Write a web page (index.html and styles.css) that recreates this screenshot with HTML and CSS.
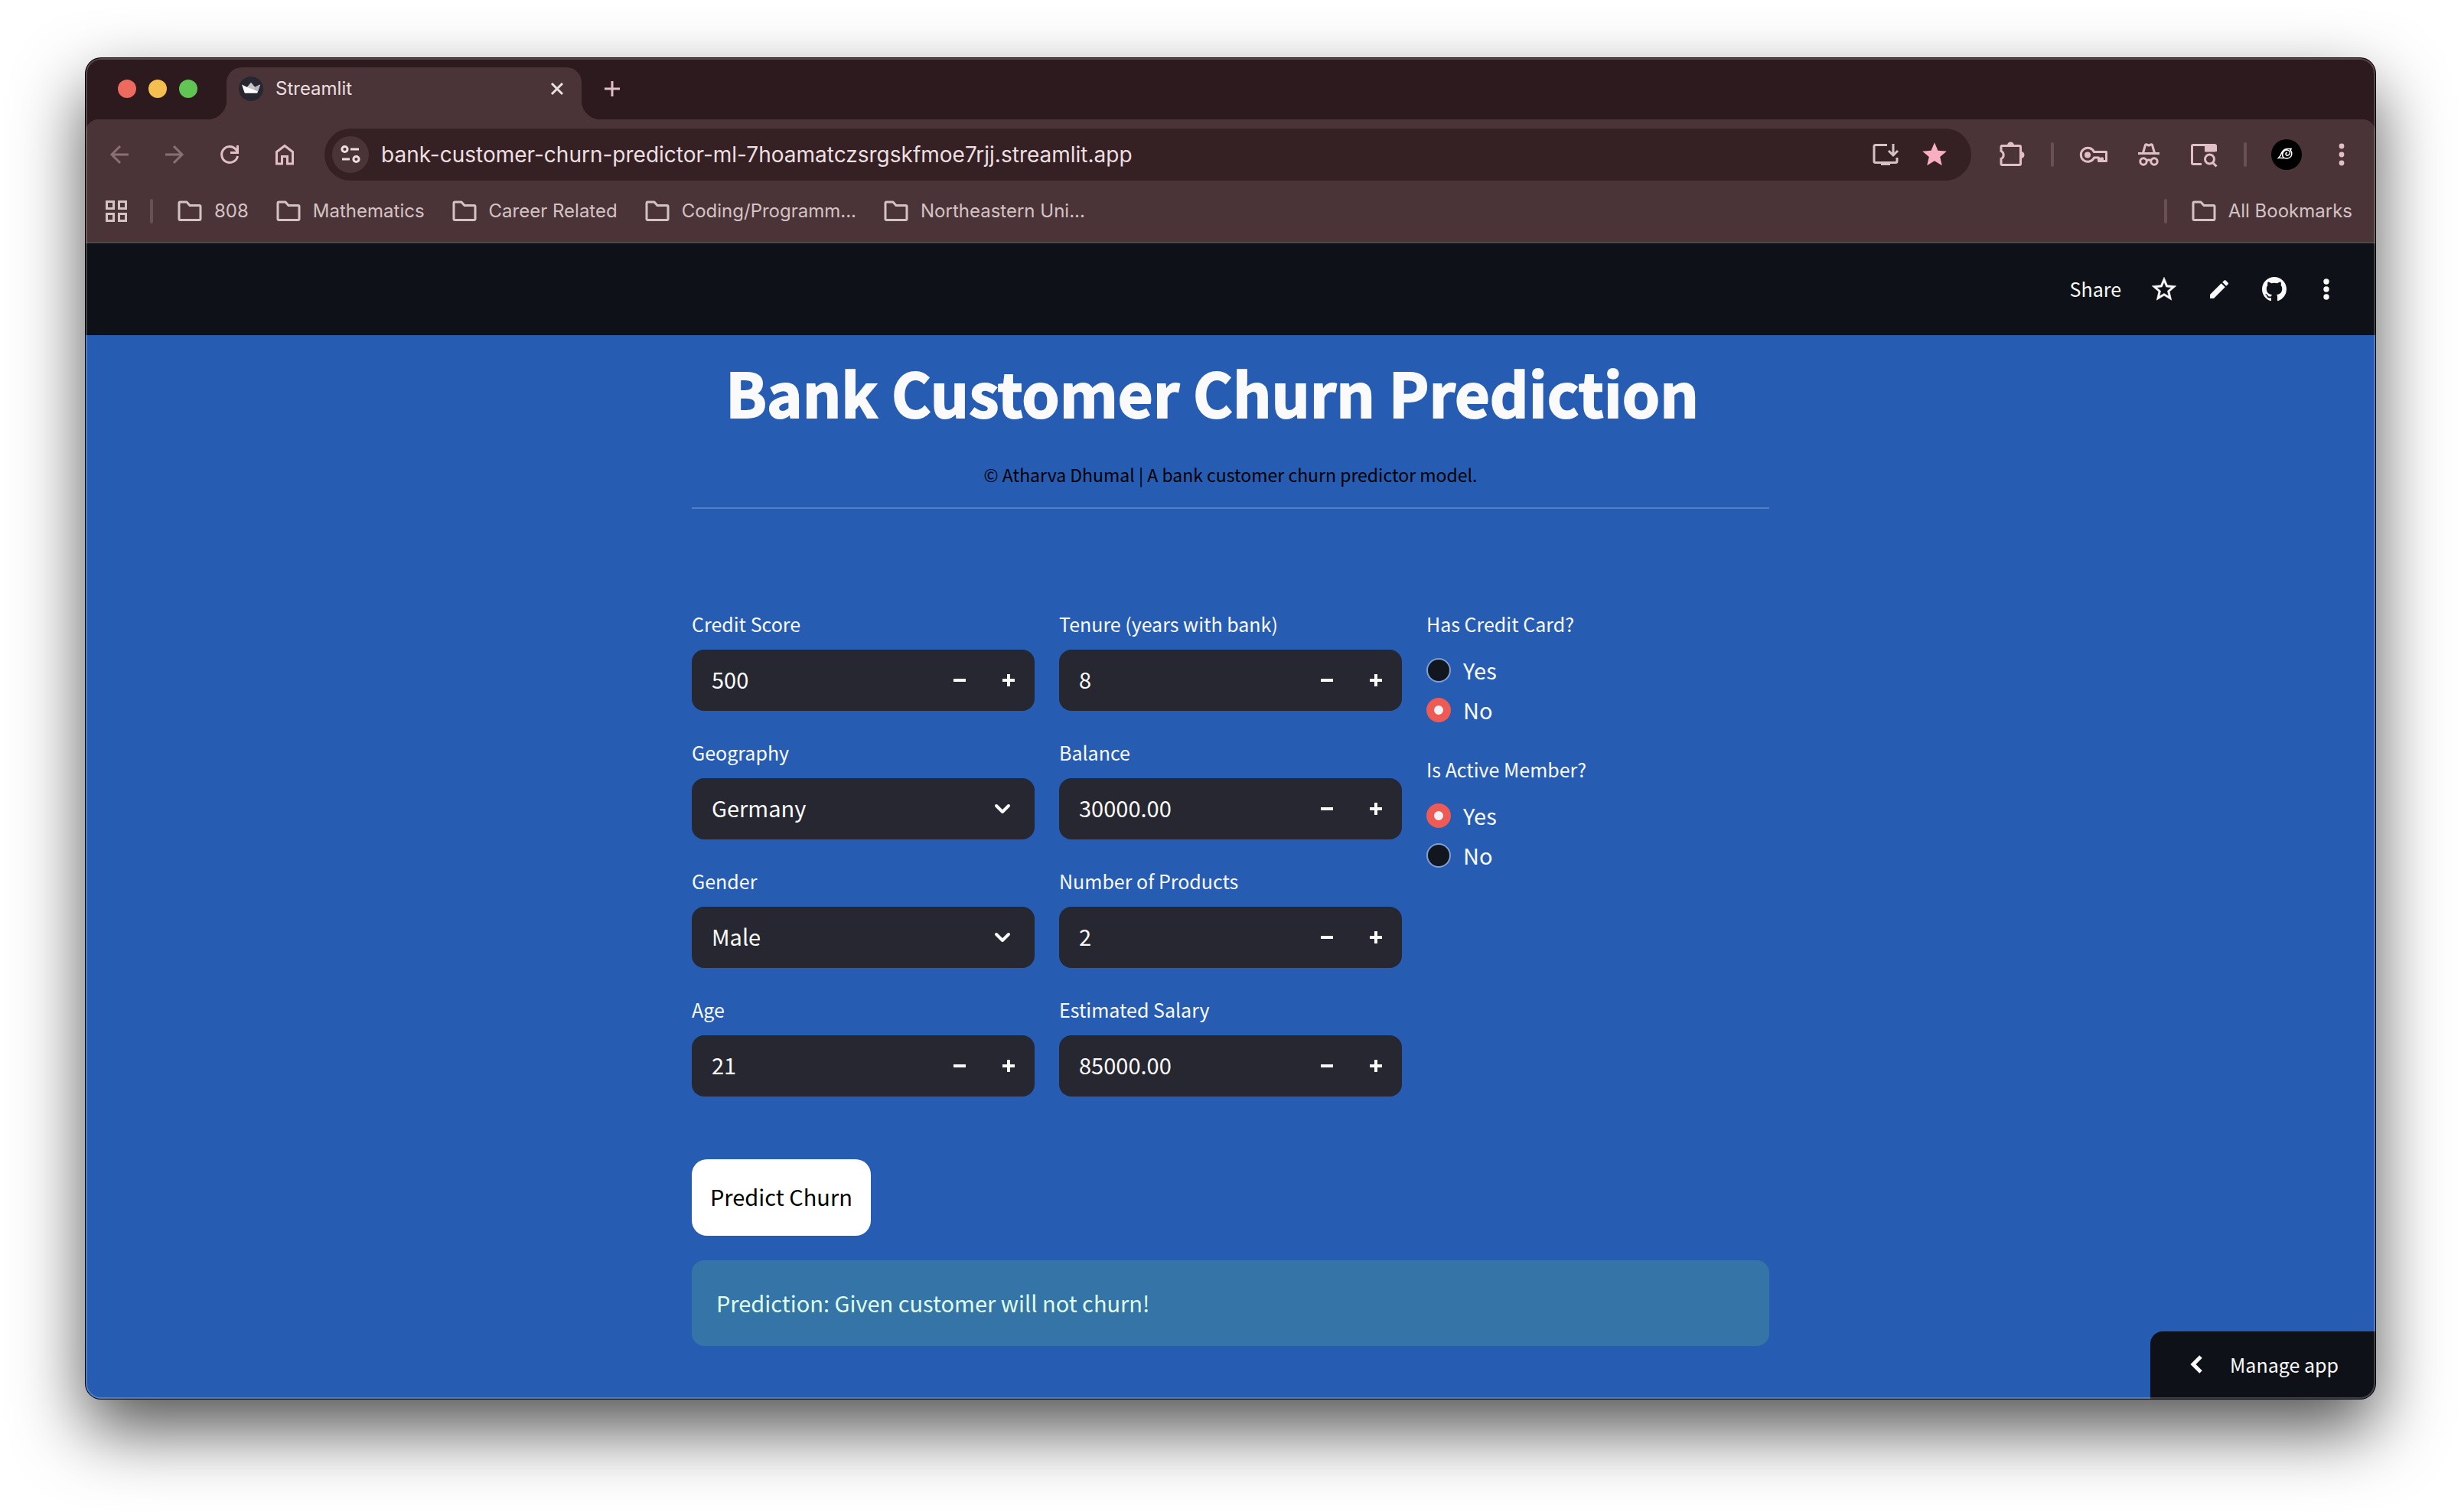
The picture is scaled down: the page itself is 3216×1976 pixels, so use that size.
FILE: index.html
```html
<!DOCTYPE html>
<html lang="en">
<head>
<meta charset="utf-8">
<title>Streamlit</title>
<link rel="stylesheet" href="styles.css">
</head>
<body>
<svg class="sprite" aria-hidden="true">
  <symbol id="folder" viewBox="0 0 32 32"><path d="M2 5.500a1.500 1.500 0 0 1 1.500-1.500h8.500l4 4.500h12.500a1.500 1.500 0 0 1 1.500 1.500v16a1.500 1.500 0 0 1-1.500 1.500H3.500A1.500 1.500 0 0 1 2 26z" fill="none" stroke="currentColor" stroke-width="3" stroke-linejoin="round"/></symbol>
  <symbol id="chevron" viewBox="0 0 24 24"><path d="M4 8l8 8 8-8" fill="none" stroke="currentColor" stroke-width="4" stroke-linecap="round" stroke-linejoin="round"/></symbol>
  <symbol id="minus" viewBox="0 0 16 16"><path d="M0 8h16" stroke="currentColor" stroke-width="4"/></symbol>
  <symbol id="plus" viewBox="0 0 16 16"><path d="M0 8h16M8 0v16" stroke="currentColor" stroke-width="4"/></symbol>
</svg>
<div class="window">
  <div class="tabstrip">
    <div class="lights"><span class="light red"></span><span class="light yellow"></span><span class="light green"></span></div>
    <div class="tab">
      <svg class="favicon" viewBox="0 0 32 32"><circle cx="16" cy="16" r="16" fill="#262730"/><path d="M4 10.500l7 3.500L16 8l5 6 7-3.500L24.500 21a1 1 0 0 1-1 .8h-15a1 1 0 0 1-1-.8z" fill="#fff"/><path d="M16 8l5 6-2 3-8-3z" fill="#c4c4c8"/><path d="M28 10.500l-7 3.500-2 3 6 2.500z" fill="#b5b5ba"/></svg>
      <span class="tab-title">Streamlit</span>
      <button class="tab-close" aria-label="Close tab"><svg width="24" height="24" viewBox="0 0 24 24"><path d="M5 5l14 14M19 5L5 19" stroke="currentColor" stroke-width="3"/></svg></button>
    </div>
    <button class="icon-btn" aria-label="New tab"><svg width="24" height="24" viewBox="0 0 24 24"><path d="M2 12h20M12 2v20" stroke="currentColor" stroke-width="3"/></svg></button>
  </div>
  <div class="chrome">
    <div class="toolbar">
      <div class="tools">
        <button class="icon-btn dim" aria-label="Back"><svg width="32" height="32" viewBox="0 0 32 32"><path d="M28 16H6M17 5L6 16l11 11" fill="none" stroke="currentColor" stroke-width="3"/></svg></button>
        <button class="icon-btn dim" aria-label="Forward"><svg width="32" height="32" viewBox="0 0 32 32"><path d="M4 16h22M15 5l11 11-11 11" fill="none" stroke="currentColor" stroke-width="3"/></svg></button>
        <button class="icon-btn" aria-label="Reload"><svg width="32" height="32" viewBox="0 0 32 32"><path d="M26.500 18A10.500 10.500 0 1 1 24 9l2 2.500" fill="none" stroke="currentColor" stroke-width="3"/><path d="M26.500 4v9.500H17" fill="none" stroke="currentColor" stroke-width="3"/></svg></button>
        <button class="icon-btn" aria-label="Home"><svg width="32" height="32" viewBox="0 0 32 32"><path d="M5.500 28V12.500L16 4.500l10.500 8V28H19.500V18.500h-7V28z" fill="none" stroke="currentColor" stroke-width="3"/></svg></button>
      </div>
      <div class="omnibox">
        <button class="site-info" aria-label="Site information"><svg width="32" height="32" viewBox="0 0 32 32" fill="none" stroke="currentColor" stroke-width="3"><circle cx="8.500" cy="9" r="3.600"/><path d="M16 9h11M5 22h10"/><circle cx="23.500" cy="22" r="3.600"/></svg></button>
        <input class="url" type="text" aria-label="Address" value="bank-customer-churn-predictor-ml-7hoamatczsrgskfmoe7rjj.streamlit.app">
        <button class="icon-btn soft" aria-label="Install app"><svg width="40" height="40" viewBox="0 0 40 40" fill="none" stroke="currentColor" stroke-width="3"><path d="M22 7.500H7a2 2 0 0 0-2 2v19a2 2 0 0 0 2 2h26a2 2 0 0 0 2-2V24"/><path d="M30 6v14M24 15l6 6 6-6"/><path d="M14 30h12v4H14z" fill="currentColor" stroke="none"/></svg></button>
        <button class="icon-btn star" aria-label="Bookmark this tab"><svg width="38" height="38" viewBox="0 0 24 24"><path fill="currentColor" d="M12 17.270L18.180 21l-1.640-7.030L22 9.240l-7.190-.61L12 2 9.190 8.630 2 9.240l5.460 4.730L5.820 21z"/></svg></button>
      </div>
      <div class="tools">
        <button class="icon-btn" aria-label="Extensions"><svg width="40" height="40" viewBox="0 0 40 40"><path d="M7 8.500h24a1.500 1.500 0 0 1 1.500 1.500v22a1.500 1.500 0 0 1-1.500 1.500H8.500A1.500 1.500 0 0 1 7 32v-6.500a5.500 5.500 0 0 0 0-10V10a1.500 1.500 0 0 1 1.500-1.500z" fill="none" stroke="currentColor" stroke-width="3"/><path d="M15 8a4.500 4.500 0 0 1 9 0zM33 16a4.500 4.500 0 0 1 0 9z" fill="currentColor"/></svg></button>
        <span class="sep"></span>
        <button class="icon-btn" aria-label="Passwords"><svg width="40" height="40" viewBox="0 0 40 40"><path d="M20.500 16.500a9 9 0 1 0 0 7.500h6v4.500h3v-3.500h2v3.500h5v-12z" fill="none" stroke="currentColor" stroke-width="3" stroke-linejoin="round"/><circle cx="12" cy="20.500" r="4" fill="currentColor"/></svg></button>
        <button class="icon-btn" aria-label="Incognito"><svg width="40" height="40" viewBox="0 0 40 40" fill="none" stroke="currentColor" stroke-width="3"><path d="M6 18.500h28M12.500 18l3-10.500c1.500-2 3 .5 4.500.5s3-2.500 4.500-.5l3 10.500"/><circle cx="13" cy="29" r="4.200"/><circle cx="27" cy="29" r="4.200"/><path d="M17 28c2-1.200 4-1.200 6 0"/></svg></button>
        <button class="icon-btn" aria-label="Search tabs"><svg width="40" height="40" viewBox="0 0 40 40" fill="none" stroke="currentColor" stroke-width="3"><path d="M17 32.500H6a1.500 1.500 0 0 1-1.500-1.500V9A1.500 1.500 0 0 1 6 7.500h28a1.500 1.500 0 0 1 1.500 1.500v7"/><path d="M21 8h14v8.500H21z" fill="currentColor" stroke="none"/><circle cx="27.500" cy="26" r="6"/><path d="M31.500 30.500l5 5"/></svg></button>
        <span class="sep"></span>
        <button class="icon-btn" aria-label="Profile"><svg width="40" height="40" viewBox="0 0 40 40"><circle cx="20" cy="20" r="20"/><path d="M21 18c-1.500-1-3 1-1.500 2.500s5 0 5-3-4-4.500-7-2.500-4 7-1 9 8 1 9.500-2 .5-6-1-8l1.500-2c-2 1.500-5.500-.5-9 1.500s-4.500 5-5.500 8l-2.500 3c3-.5 5 .5 8 0" fill="none" stroke="#fff" stroke-width="1.500"/></svg></button>
        <button class="icon-btn" aria-label="Menu"><svg width="12" height="40" viewBox="0 0 12 40" fill="currentColor"><circle cx="6" cy="9" r="3.400"/><circle cx="6" cy="20" r="3.400"/><circle cx="6" cy="31" r="3.400"/></svg></button>
      </div>
    </div>
    <nav class="bookmarks">
      <button class="apps" aria-label="Apps"><svg width="32" height="32" viewBox="0 0 32 32" fill="none" stroke="currentColor" stroke-width="3"><path d="M3.500 3.500h9v9h-9zM19.500 3.500h9v9h-9zM3.500 19.500h9v9h-9zM19.500 19.500h9v9h-9z"/></svg></button>
      <span class="sep"></span>
      <div class="links">
        <a href="#"><svg width="32" height="32"><use href="#folder"/></svg>808</a>
        <a href="#"><svg width="32" height="32"><use href="#folder"/></svg>Mathematics</a>
        <a href="#"><svg width="32" height="32"><use href="#folder"/></svg>Career Related</a>
        <a href="#"><svg width="32" height="32"><use href="#folder"/></svg>Coding/Programm...</a>
        <a href="#"><svg width="32" height="32"><use href="#folder"/></svg>Northeastern Uni...</a>
      </div>
      <span class="sep"></span>
      <a href="#"><svg width="32" height="32"><use href="#folder"/></svg>All Bookmarks</a>
    </nav>
  </div>
  <header class="app-header">
    <button class="share">Share</button>
    <button class="head-btn" aria-label="Favorite"><svg width="38" height="38" viewBox="0 0 24 24"><path fill="currentColor" stroke="currentColor" stroke-width=".3" d="M22 9.240l-7.190-.62L12 2 9.190 8.630 2 9.240l5.460 4.730L5.820 21 12 17.270 18.180 21l-1.630-7.030L22 9.240zM12 15.400l-3.760 2.270 1-4.280-3.320-2.880 4.380-.38L12 6.100l1.710 4.040 4.380.38-3.320 2.880 1 4.280L12 15.400z"/></svg></button>
    <button class="head-btn" aria-label="Edit"><svg width="32" height="32" viewBox="0 0 24 24"><path fill="currentColor" d="M3 17.250V21h3.750L17.810 9.940l-3.750-3.750L3 17.250zM20.710 7.040a1 1 0 0 0 0-1.410l-2.340-2.340a1 1 0 0 0-1.410 0l-1.830 1.830 3.750 3.750 1.830-1.830z"/></svg></button>
    <button class="head-btn" aria-label="View source"><svg width="32" height="32" viewBox="0 0 16 16"><path fill="currentColor" d="M8 0C3.580 0 0 3.580 0 8c0 3.540 2.290 6.530 5.470 7.590.4.070.55-.17.55-.38 0-.19-.01-.82-.01-1.490-2.010.37-2.530-.49-2.690-.94-.09-.23-.48-.94-.82-1.130-.28-.15-.68-.52-.01-.53.63-.01 1.080.58 1.230.82.72 1.210 1.870.87 2.330.66.07-.52.28-.87.51-1.070-1.780-.2-3.640-.89-3.640-3.950 0-.87.31-1.590.82-2.150-.08-.2-.36-1.020.08-2.120 0 0 .67-.21 2.200.82.64-.18 1.320-.27 2-.27s1.360.09 2 .27c1.530-1.040 2.200-.82 2.200-.82.44 1.100.16 1.920.08 2.120.51.56.82 1.270.82 2.150 0 3.070-1.870 3.750-3.650 3.950.29.25.54.73.54 1.480 0 1.070-.01 1.930-.01 2.200 0 .21.15.46.55.38A8.010 8.010 0 0 0 16 8c0-4.420-3.580-8-8-8z"/></svg></button>
    <button class="head-btn narrow" aria-label="More"><svg width="12" height="40" viewBox="0 0 12 40" fill="currentColor"><circle cx="6" cy="10" r="3.700"/><circle cx="6" cy="20" r="3.700"/><circle cx="6" cy="30" r="3.700"/></svg></button>
  </header>
  <main class="app">
    <div class="container">
      <h1>Bank Customer Churn Prediction</h1>
      <p class="caption">© Atharva Dhumal | A bank customer churn predictor model.</p>
      <hr>
      <form class="form">
        <div class="col">
          <div class="field"><label for="credit">Credit Score</label>
            <div class="number"><input id="credit" type="number" value="500"><button type="button" aria-label="Decrease"><svg width="16" height="16"><use href="#minus"/></svg></button><button type="button" aria-label="Increase"><svg width="16" height="16"><use href="#plus"/></svg></button></div></div>
          <div class="field"><label for="geo">Geography</label>
            <div class="select"><select id="geo"><option>Germany</option><option>France</option><option>Spain</option></select><svg width="24" height="24"><use href="#chevron"/></svg></div></div>
          <div class="field"><label for="gender">Gender</label>
            <div class="select"><select id="gender"><option>Male</option><option>Female</option></select><svg width="24" height="24"><use href="#chevron"/></svg></div></div>
          <div class="field"><label for="age">Age</label>
            <div class="number"><input id="age" type="number" value="21"><button type="button" aria-label="Decrease"><svg width="16" height="16"><use href="#minus"/></svg></button><button type="button" aria-label="Increase"><svg width="16" height="16"><use href="#plus"/></svg></button></div></div>
        </div>
        <div class="col">
          <div class="field"><label for="tenure">Tenure (years with bank)</label>
            <div class="number"><input id="tenure" type="number" value="8"><button type="button" aria-label="Decrease"><svg width="16" height="16"><use href="#minus"/></svg></button><button type="button" aria-label="Increase"><svg width="16" height="16"><use href="#plus"/></svg></button></div></div>
          <div class="field"><label for="balance">Balance</label>
            <div class="number"><input id="balance" type="number" step="0.01" value="30000.00"><button type="button" aria-label="Decrease"><svg width="16" height="16"><use href="#minus"/></svg></button><button type="button" aria-label="Increase"><svg width="16" height="16"><use href="#plus"/></svg></button></div></div>
          <div class="field"><label for="products">Number of Products</label>
            <div class="number"><input id="products" type="number" value="2"><button type="button" aria-label="Decrease"><svg width="16" height="16"><use href="#minus"/></svg></button><button type="button" aria-label="Increase"><svg width="16" height="16"><use href="#plus"/></svg></button></div></div>
          <div class="field"><label for="salary">Estimated Salary</label>
            <div class="number"><input id="salary" type="number" step="0.01" value="85000.00"><button type="button" aria-label="Decrease"><svg width="16" height="16"><use href="#minus"/></svg></button><button type="button" aria-label="Increase"><svg width="16" height="16"><use href="#plus"/></svg></button></div></div>
        </div>
        <div class="col">
          <fieldset class="radios"><legend>Has Credit Card?</legend>
            <label><input type="radio" name="card">Yes</label>
            <label><input type="radio" name="card" checked>No</label>
          </fieldset>
          <fieldset class="radios"><legend>Is Active Member?</legend>
            <label><input type="radio" name="active" checked>Yes</label>
            <label><input type="radio" name="active">No</label>
          </fieldset>
        </div>
      </form>
      <button class="predict">Predict Churn</button>
      <div class="alert" role="alert">Prediction: Given customer will not churn!</div>
    </div>
  </main>
  <button class="manage"><svg width="24" height="28" viewBox="0 0 24 28"><path d="M18 4L8 14l10 10" fill="none" stroke="currentColor" stroke-width="5"/></svg>Manage app</button>
</div>
</body>
</html>
```
FILE: styles.css
```css
* { box-sizing: border-box; }
body {
  margin: 0;
  min-height: 100vh;
  padding: 76px 112px 148px;
  display: flex;
  background: #fff;
  overflow: hidden;
  font-family: "Noto Sans CJK SC", "Open Sans", sans-serif;
  color: #fafafa;
}
button, input, select { font: inherit; color: inherit; margin: 0; border: 0; background: none; padding: 0; outline: 0; }
svg { display: block; flex: none; }
a { color: inherit; text-decoration: none; }
.sprite { position: absolute; width: 0; height: 0; }

.window {
  position: relative;
  flex: 1;
  display: flex;
  flex-direction: column;
  overflow: hidden;
  border-radius: 20px;
  background: #2d1a1e;
  box-shadow: 0 0 0 1px #000, 0 40px 90px rgba(0, 0, 0, .68);
}
.window::after {
  content: "";
  position: absolute;
  inset: 0;
  border: 2px solid rgba(255, 255, 255, .2);
  border-radius: 20px;
  pointer-events: none;
}

/* Browser chrome */
.tabstrip, .chrome { font-family: Inter, "Liberation Sans", sans-serif; }
.tabstrip { display: flex; align-items: center; height: 80px; padding-left: 42px; color: #e0bfc7; }
.lights { display: flex; gap: 16px; margin-right: 38px; }
.light { width: 24px; height: 24px; border-radius: 50%; }
.red { background: #ed6a5e; }
.yellow { background: #f5bf4f; }
.green { background: #61c554; }
.tab {
  position: relative;
  align-self: flex-end;
  display: flex;
  align-items: center;
  width: 464px;
  height: 68px;
  padding: 0 20px 12px 16px;
  margin-right: 16px;
  border-radius: 20px 20px 0 0;
  background: #4b3437;
  color: #ecdfe0;
}
.tab::before, .tab::after { content: ""; position: absolute; bottom: 0; width: 24px; height: 24px; }
.tab::before { right: 100%; background: radial-gradient(circle at 0 0, transparent 24px, #4b3437 24px); }
.tab::after { left: 100%; background: radial-gradient(circle at 100% 0, transparent 24px, #4b3437 24px); }
.favicon { width: 32px; height: 32px; }
.tab-title { flex: 1; margin-left: 16px; font-size: 24px; line-height: 32px; }
.icon-btn { display: grid; place-items: center; width: 48px; height: 48px; flex: none; }
.chrome { background: #4b3437; border-radius: 16px 16px 0 0; border-bottom: 2px solid #524648; color: #e0bfc7; }
.toolbar { display: flex; align-items: center; padding: 12px 20px 0; }
.tools { display: flex; align-items: center; gap: 24px; }
.dim { color: #8a7074; }
.soft { color: #d4c3c5; }
.star { color: #f8b0c0; }
.omnibox {
  flex: 1;
  display: flex;
  align-items: center;
  height: 68px;
  margin: 0 28px;
  padding: 0 24px 0 10px;
  gap: 16px;
  border-radius: 34px;
  background: #352024;
  color: #ecdfe0;
}
.site-info { display: grid; place-items: center; width: 48px; height: 48px; border-radius: 50%; background: #4b3437; }
.url { flex: 1; min-width: 0; font-size: 28px; line-height: 36px; }
.sep { width: 4px; height: 32px; margin: 0 4px; border-radius: 2px; background: #685054; }
.bookmarks { display: flex; align-items: center; height: 80px; padding: 0 30px 0 24px; color: #d4c3c5; font-size: 24px; line-height: 32px; }
.bookmarks .sep { margin: 0 32px 0 28px; }
.bookmarks a { display: flex; align-items: center; gap: 16px; white-space: nowrap; }
.links { flex: 1; display: flex; gap: 36px; }

/* Streamlit header */
.app-header { display: flex; align-items: center; justify-content: flex-end; gap: 32px; height: 120px; padding-right: 48px; background: #0e1117; }
.share { padding: 0 4px 2px 0; font-size: 25px; line-height: 40px; }
.head-btn { display: grid; place-items: center; width: 40px; height: 40px; }
.narrow { width: 32px; }

/* App body */
.app { flex: 1; padding: 22px 64px 68px; background: #265db3; }
.container { max-width: 1408px; margin: 0 auto; }
h1 { margin: 0 0 36px; padding-right: 48px; text-align: center; font-size: 79px; line-height: 104px; font-weight: 700; -webkit-text-stroke: 2px currentColor; }
.caption { margin: 0 0 23px; text-align: center; font-size: 23px; line-height: 40px; color: #000; }
hr { height: 2px; margin: 0 0 130px; border: 0; background: #5180c4; }
.form { display: grid; grid-template-columns: repeat(3, minmax(0, 1fr)); gap: 32px; margin-bottom: 82px; }
.col { display: flex; flex-direction: column; gap: 34px; }
.field { display: flex; flex-direction: column; gap: 14px; }
.field > label, legend { font-size: 25px; line-height: 40px; }
.number { display: flex; height: 80px; border-radius: 16px; background: #262730; overflow: hidden; }
.number input { flex: 1; min-width: 0; padding: 0 0 4px 26px; font-size: 29px; appearance: textfield; }
.number input::-webkit-inner-spin-button { appearance: none; margin: 0; }
.number button { display: grid; place-items: center; width: 64px; }
.number button:last-child { margin-right: 2px; }
.select { display: grid; grid-template-columns: 1fr; align-items: center; height: 80px; border-radius: 16px; background: #262730; }
.select select { grid-area: 1 / 1; height: 80px; padding: 0 64px 4px 26px; font-size: 29px; appearance: none; }
.select svg { grid-area: 1 / 1; justify-self: end; margin-right: 30px; pointer-events: none; }
option { color: #000; }
.radios { min-width: 0; margin: 0; padding: 0; border: 0; display: grid; gap: 4px; }
legend { padding: 0; margin-bottom: 16px; }
.radios label { display: flex; align-items: center; gap: 16px; height: 48px; font-size: 29px; line-height: 44px; }
.radios input { appearance: none; width: 32px; height: 32px; margin-top: 2px; border: 2px solid #809fd3; border-radius: 50%; background: #12161f; }
.radios input:checked { border: 10px solid #ee5a54; background: #f0f2f6; }
.predict { display: block; height: 100px; margin-bottom: 32px; padding: 0 24px 4px; border-radius: 20px; background: #fff; color: #000; font-size: 29px; }
.alert { padding: 32px 32px 34px; border-radius: 16px; background: #3574a6; color: #dffde9; font-size: 29px; line-height: 46px; }
.manage {
  position: absolute;
  right: 0;
  bottom: 0;
  display: flex;
  align-items: center;
  gap: 32px;
  height: 88px;
  padding: 0 48px 2px;
  border-radius: 16px 0 0 0;
  background: #0e1117;
  font-size: 25px;
}
```
